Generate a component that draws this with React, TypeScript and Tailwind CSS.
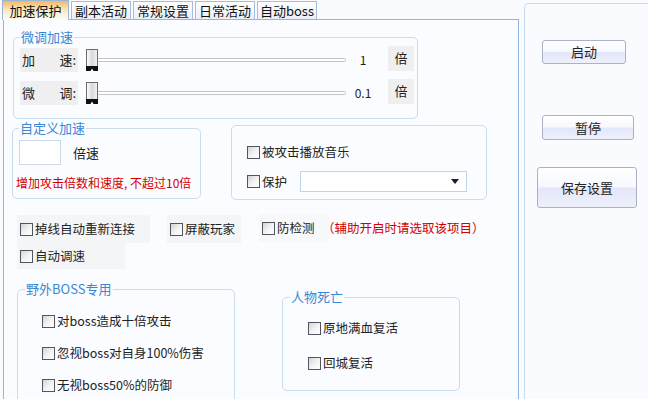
import React from 'react';

const font = { fontFamily: '"Noto Sans CJK SC", "Liberation Sans", sans-serif' };

const tabs = ['加速保护', '副本活动', '常规设置', '日常活动', '自动boss'];

const Check: React.FC<{ label: string; className?: string }> = ({ label, className = '' }) => (
    <label className={`flex items-center gap-[2px] text-[12.5px] leading-[14px] text-[#222] ${className}`}>
        <span className="w-[13px] h-[13px] border border-[#4d5661] bg-gradient-to-br from-[#d4d4d4] via-[#f2f2f2] to-white shrink-0" />
        <span className="whitespace-nowrap">{label}</span>
    </label>
);

const Thumb: React.FC = () => (
    <svg width="12" height="22" viewBox="0 0 12 22" className="shrink-0">
        <defs>
            <linearGradient id="tg" x1="0" x2="1" y1="0" y2="0">
                <stop offset="0" stopColor="#ffffff" />
                <stop offset="0.5" stopColor="#d8d8d8" />
                <stop offset="1" stopColor="#f4f4f4" />
            </linearGradient>
        </defs>
        <rect x="0.5" y="0.5" width="11" height="18" fill="url(#tg)" stroke="#6b6b6b" />
        <path d="M0 17 H12 V22 H7.5 L6 19.5 L4.5 22 H0 Z" fill="#111" />
    </svg>
);

const Slider: React.FC<{ label: [string, string]; value: string }> = ({ label, value }) => (
    <div className="flex items-center h-[24px]">
        <div className="w-[58px] h-[24px] bg-[#efefef] flex items-center justify-between px-[2px] text-[13px] text-[#222]">
            <span>{label[0]}</span>
            <span>{label[1]}</span>
        </div>
        <div className="ml-[8px] flex items-center">
            <Thumb />
            <div className="w-[248px] h-[4px] border-y border-r border-[#c4c4c4] bg-white rounded-r-full" />
        </div>
        <div className="w-[30px] ml-[2px] text-center text-[12px] text-[#222]">{value}</div>
        <div className="ml-[10px] w-[26px] h-[25px] -mt-[4px] bg-[#efefef] flex items-center justify-center text-[13px] text-[#222]">倍</div>
    </div>
);

const Group: React.FC<{ title?: string; className: string; titleLeft?: string; children: React.ReactNode }> = ({ title, className, titleLeft = 'left-[6px]', children }) => (
    <div className={`relative border border-[#c9ddef] rounded-[5px] ${className}`}>
        {title && (
            <span className={`absolute -top-[10px] ${titleLeft} px-[1px] bg-[#fafcff] text-[13px] leading-[18px] text-[#3a88d3]`}>{title}</span>
        )}
        {children}
    </div>
);

const Button: React.FC<{ label: string; className: string }> = ({ label, className }) => (
    <button className={`border border-[#a9b2c6] rounded-[3px] text-[13px] text-[#222] bg-[linear-gradient(#ffffff_0%,#f7f8fe_48%,#e3e6f8_52%,#eef0fb_100%)] flex items-center justify-center ${className}`}>
        {label}
    </button>
);

export default function App() {
    return (
        <div className="w-[648px] h-[399px] overflow-hidden bg-[#f9fbfe] flex" style={font}>
            <div className="w-[517px] ml-[2px] flex flex-col shrink-0">
                <div className="flex items-end h-[20px]">
                    {tabs.map((t, i) => (
                        <div
                            key={t}
                            className={
                                i === 0
                                    ? 'h-[20px] w-[67px] border border-b-0 border-[#9bb5d6] bg-gradient-to-b from-[#f3b95c] via-[#fbe9c6] to-[#fffdf8] flex items-center justify-center text-[13px] text-[#111] relative z-10 -mb-px'
                                    : 'h-[18px] w-[60px] ml-[2px] border border-b-0 border-[#a7bcd8] bg-gradient-to-b from-white to-[#e9eef6] flex items-center justify-center text-[13px] text-[#111] whitespace-nowrap'
                            }
                        >
                            {t}
                        </div>
                    ))}
                </div>
                <div className="flex-1 ml-[1px] border border-b-0 border-[#8fb5e2] bg-[#fafcff] flex flex-col">
                    <Group title="微调加速" className="ml-[9px] mt-[17px] w-[405px] h-[82px] pl-[6px] pt-[10px] flex flex-col gap-[9px]">
                        <Slider label={['加', '速:']} value="1" />
                        <Slider label={['微', '调:']} value="0.1" />
                    </Group>

                    <div className="flex items-start mt-[6px]">
                        <Group title="自定义加速" className="ml-[8px] mt-[3px] w-[189px] h-[71px] flex flex-col">
                            <div className="flex items-center mt-[11px] ml-[6px]">
                                <div className="w-[42px] h-[25px] border border-[#cbd9e8] bg-white" />
                                <span className="ml-[12px] text-[13px] text-[#222]">倍速</span>
                            </div>
                            <div className="ml-[3px] mt-[9px] text-[12px] text-[#d40000] whitespace-nowrap">增加攻击倍数和速度, 不超过10倍</div>
                        </Group>
                        <Group className="ml-[30px] w-[256px] h-[75px] flex flex-col pl-[15px]">
                            <Check label="被攻击播放音乐" className="mt-[19px]" />
                            <div className="flex items-center mt-[12px]">
                                <Check label="保护" />
                                <div className="ml-[13px] w-[167px] h-[21px] border border-[#bcd4ec] bg-white flex items-center justify-end pr-[7px]">
                                    <svg width="8" height="5" viewBox="0 0 8 5"><path d="M0 0 H8 L4 5 Z" fill="#1a1a3a" /></svg>
                                </div>
                            </div>
                        </Group>
                    </div>

                    <div className="flex items-center mt-[15px] h-[28px]">
                        <div className="ml-[13px] w-[133px] h-[28px] bg-[#f4f5f7] flex items-center pl-[3px]">
                            <Check label="掉线自动重新连接" />
                        </div>
                        <div className="ml-[17px] w-[74px] h-[28px] bg-[#f4f5f7] flex items-center pl-[3px]">
                            <Check label="屏蔽玩家" />
                        </div>
                        <div className="ml-[18px] w-[70px] h-[28px] bg-[#f7f8fa] flex items-center pl-[3px] -mt-[2px]">
                            <Check label="防检测" />
                        </div>
                        <span className="-ml-[7px] -mt-[2px] text-[12.5px] text-[#d40000] whitespace-nowrap">（辅助开启时请选取该项目）</span>
                    </div>
                    <div className="ml-[13px] w-[108px] h-[26px] bg-[#f4f5f7] flex items-center pl-[3px]">
                        <Check label="自动调速" />
                    </div>

                    <div className="flex items-start mt-[20px]">
                        <Group title="野外BOSS专用" titleLeft="left-[7px]" className="ml-[13px] w-[218px] h-[140px] flex flex-col pl-[24px] pt-[24px] gap-[18px]">
                            <Check label="对boss造成十倍攻击" />
                            <Check label="忽视boss对自身100%伤害" />
                            <Check label="无视boss50%的防御" />
                        </Group>
                        <Group title="人物死亡" titleLeft="left-[7px]" className="ml-[47px] mt-[8px] w-[178px] h-[94px] flex flex-col pl-[25px] pt-[23px] gap-[21px]">
                            <Check label="原地满血复活" />
                            <Check label="回城复活" />
                        </Group>
                    </div>
                </div>
            </div>
            <div className="flex-1 ml-[5px] mt-[3px] border border-r-0 border-b-0 border-[#cadbec] rounded-tl-[5px] bg-[#f9fbfe] flex flex-col">
                <Button label="启动" className="ml-[17px] mt-[36px] w-[84px] h-[24px]" />
                <Button label="暂停" className="ml-[17px] mt-[51px] w-[92px] h-[25px]" />
                <Button label="保存设置" className="ml-[12px] mt-[27px] w-[100px] h-[41px]" />
            </div>
        </div>
    );
}
